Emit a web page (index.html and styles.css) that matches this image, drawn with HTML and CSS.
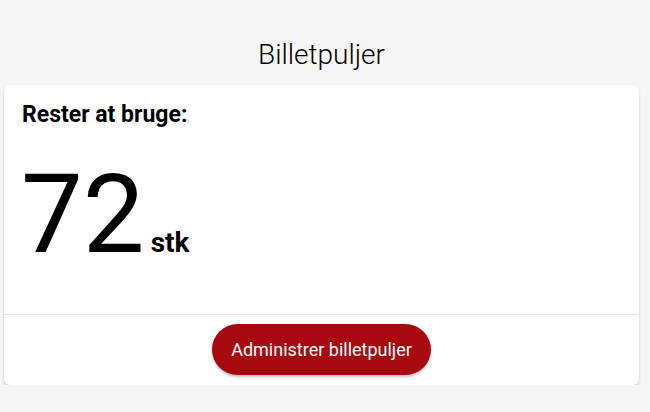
FILE: index.html
```html
<!DOCTYPE html>
<html lang="da">
<head>
  <meta charset="UTF-8">
  <title>Billetpuljer</title>
  <link rel="stylesheet" href="styles.css">
</head>
<body>

  <section class="pools">
    <h2 class="pools-title">Billetpuljer</h2>

    <div class="card">
      <div class="card-body">
        <h3 class="card-label">Rester at bruge:</h3>
        <div class="count">
          <span class="count-number">72</span>
          <span class="count-unit">stk</span>
        </div>
      </div>
      <div class="card-footer">
        <button class="manage-btn">Administrer billetpuljer</button>
      </div>
    </div>
  </section>

</body>
</html>
```

FILE: styles.css
```css
body {
  margin: 0;
  font-family: Roboto, "Liberation Sans", sans-serif;
  background-color: #f6f6f6;
  color: #000;
}

.pools {
  margin: 0 11px 0 4px;
  padding-top: 41px;
}

.pools-title {
  margin: 0 0 16px;
  font-size: 28px;
  font-weight: 300;
  text-align: center;
  line-height: 28px;
}

.card {
  background-color: #fff;
  border-radius: 6px;
  box-shadow: 0 2px 3px rgba(0, 0, 0, 0.18);
}

.card-body {
  padding: 17px 17px 44px 18px;
}

.card-label {
  margin: 0 0 32px;
  font-size: 23px;
  font-weight: 700;
  line-height: 26px;
}

.count {
  display: flex;
  align-items: baseline;
  margin-left: -1px;
}

.count-number {
  font-size: 110px;
  line-height: 1;
  font-weight: 400;
}

.count-unit {
  margin-left: 6px;
  font-size: 28px;
  font-weight: 700;
}

.card-footer {
  border-top: 1px solid #e6e6e6;
  padding: 9px 0 10px;
  display: flex;
  justify-content: center;
}

.manage-btn {
  height: 51px;
  padding: 0 19px;
  border: none;
  border-radius: 26px;
  background-color: #a8090f;
  color: #fff;
  font-family: Roboto, "Liberation Sans", sans-serif;
  font-size: 18px;
  box-shadow: 0 2px 3px rgba(0, 0, 0, 0.25);
  cursor: pointer;
}
```
